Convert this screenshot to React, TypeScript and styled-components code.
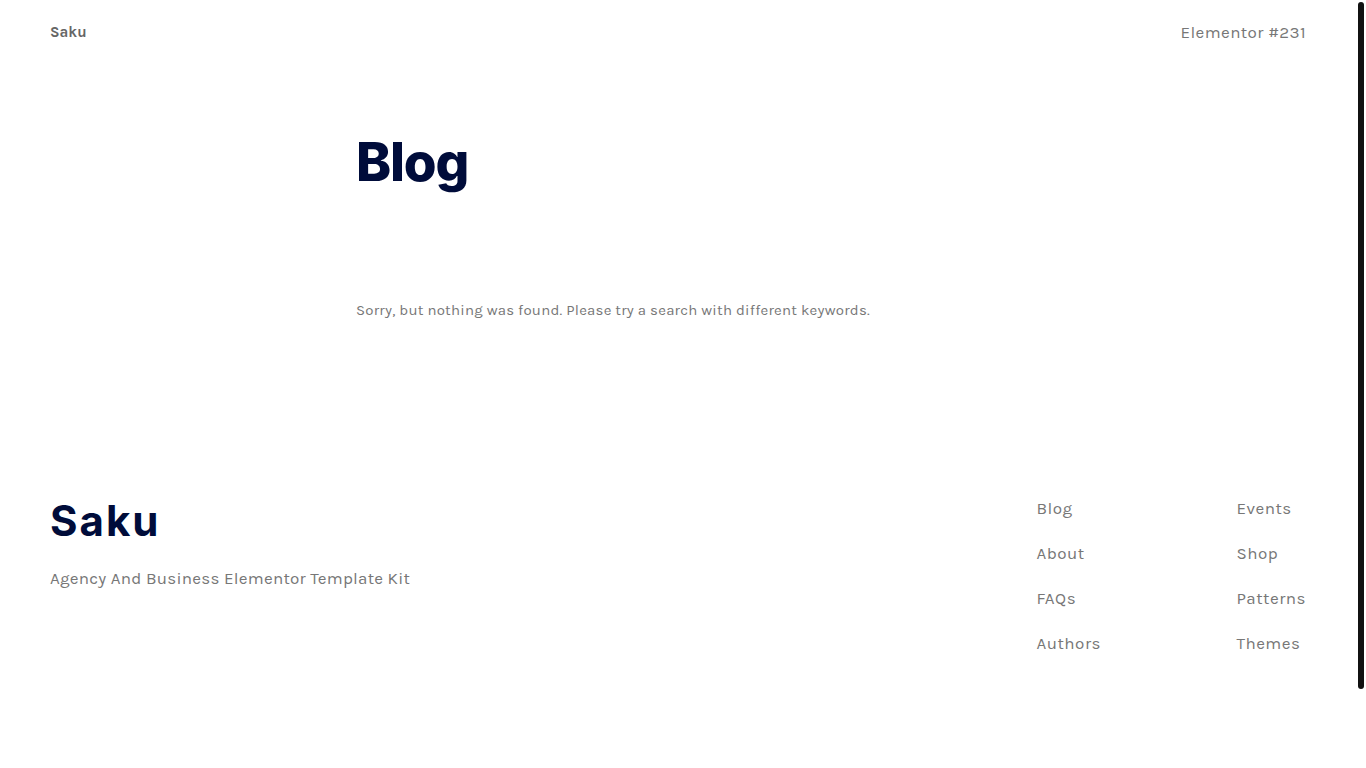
import React from 'react';
import styled, { createGlobalStyle } from 'styled-components';

const GlobalStyle = createGlobalStyle`
  html {
    background: #ffffff;
    scrollbar-width: none;
  }
  body {
    margin: 0;
    font-family: Karla, "Liberation Sans", "Noto Sans", Arial, sans-serif;
    color: #777777;
  }
  ::-webkit-scrollbar {
    display: none;
  }
`;

const Page = styled.div`
  display: flex;
  flex-direction: column;
  min-height: 858px;
  padding-right: 10px;
`;

const ScrollThumb = styled.div`
  background: #111111;
  border-radius: 3px;
  height: 687px;
  position: fixed;
  right: 2px;
  top: 2px;
  width: 6px;
`;

const Header = styled.header`
  align-items: center;
  display: flex;
  height: 64px;
  justify-content: space-between;
  padding: 0 50px;
`;

const SiteName = styled.div`
  color: #666666;
  font-size: 15px;
  font-weight: 700;
`;

const HeaderLink = styled.a`
  color: #777777;
  font-size: 17px;
  letter-spacing: 0.4px;
  text-decoration: none;
`;

const Main = styled.main`
  margin: 0 auto;
  padding: 66px 0 179px;
  width: 644px;
`;

const Title = styled.h1`
  color: #000c3a;
  font-family: Inter, "Noto Sans", sans-serif;
  font-size: 53px;
  font-weight: 800;
  letter-spacing: -1.2px;
  line-height: 64px;
  margin: 0 0 107px;
`;

const Notice = styled.p`
  color: #777777;
  font-size: 15px;
  letter-spacing: 0.22px;
  margin: 0;
`;

const Footer = styled.footer`
  display: flex;
  justify-content: space-between;
  padding: 0 50px 0 50px;
`;

const Brand = styled.div`
  display: flex;
  flex-direction: column;
`;

const BrandName = styled.div`
  color: #000c3a;
  font-family: Inter, "Noto Sans", sans-serif;
  font-size: 42px;
  font-weight: 700;
  letter-spacing: 2px;
  line-height: 46px;
`;

const Tagline = styled.div`
  color: #777777;
  font-size: 17px;
  letter-spacing: 0.25px;
  margin-top: 24px;
`;

const NavGrid = styled.nav`
  display: grid;
  grid-template-columns: 200px auto;
  row-gap: 24px;
`;

const NavLink = styled.a`
  color: #777777;
  font-size: 17px;
  letter-spacing: 0.5px;
  line-height: 21px;
  text-decoration: none;
`;

const links = ['Blog', 'Events', 'About', 'Shop', 'FAQs', 'Patterns', 'Authors', 'Themes'];

const App: React.FC = () => (
  <>
    <GlobalStyle />
    <Page>
      <Header>
        <SiteName>Saku</SiteName>
        <HeaderLink href="#">Elementor #231</HeaderLink>
      </Header>
      <Main>
        <Title>Blog</Title>
        <Notice>Sorry, but nothing was found. Please try a search with different keywords.</Notice>
      </Main>
      <Footer>
        <Brand>
          <BrandName>Saku</BrandName>
          <Tagline>Agency And Business Elementor Template Kit</Tagline>
        </Brand>
        <NavGrid>
          {links.map((link) => (
            <NavLink key={link} href="#">
              {link}
            </NavLink>
          ))}
        </NavGrid>
      </Footer>
    </Page>
    <ScrollThumb />
  </>
);

export default App;
